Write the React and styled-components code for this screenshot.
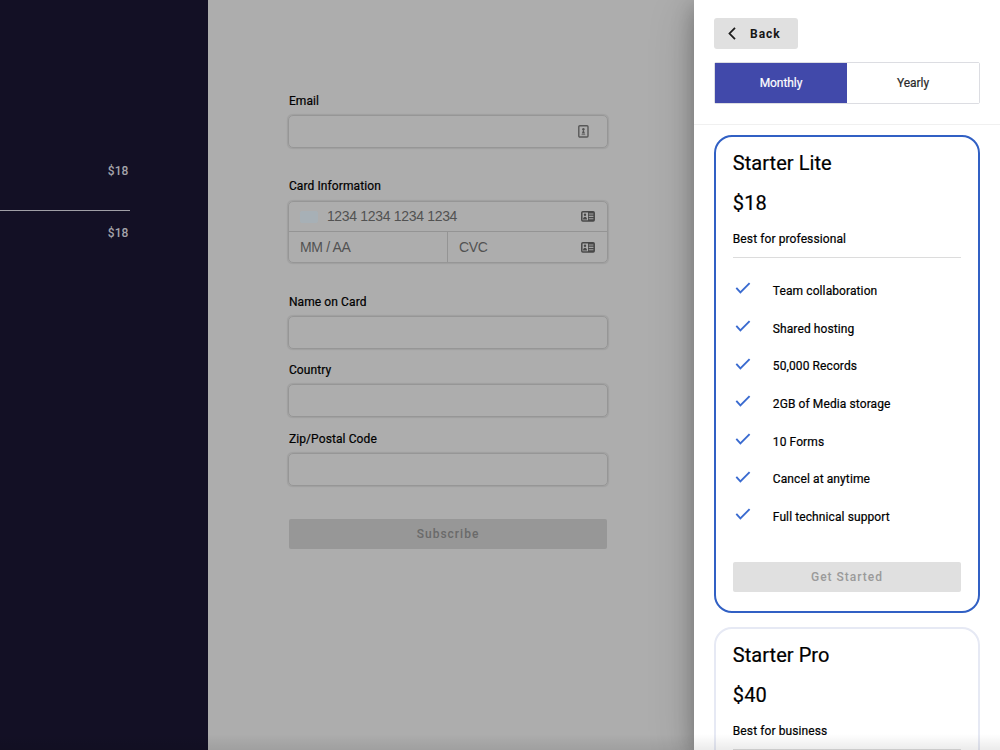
import React from 'react'
import styled, { createGlobalStyle } from 'styled-components';

const plans = [
  {
    name: 'Starter Lite',
    price: '$18',
    note: 'Best for professional',
    active: true,
    features: [
      'Team collaboration',
      'Shared hosting',
      '50,000 Records',
      '2GB of Media storage',
      '10 Forms',
      'Cancel at anytime',
      'Full technical support',
    ],
  },
  { name: 'Starter Pro', price: '$40', note: 'Best for business' },
];

function ContactIcon() {
  return (
    <svg width="11" height="13" viewBox="0 0 11 13" fill="none">
      <rect x="0.8" y="0.8" width="9.2" height="11.2" rx="1" stroke="#585858" strokeWidth="1.4" />
      <circle cx="5.4" cy="4.2" r="1.2" fill="#555" />
      <path d="M5.4 4.6 L7 8.4 H3.8 Z" fill="#555" />
      <path d="M3.6 9.6 H7.2" stroke="#686868" strokeWidth="0.9" />
    </svg>
  )
}

function CardIcon() {
  return (
    <svg width="14" height="11" viewBox="0 0 14 11" fill="none">
      <rect x="0.8" y="0.8" width="12.4" height="9.2" rx="1" stroke="#484848" strokeWidth="1.5" />
      <path d="M7 1 H13 V10 H7 Z" fill="#484848" />
      <path d="M7.8 3 H12.4 M7.8 5.4 H12.4 M7.8 7.8 H12.4" stroke="#a2a2a2" strokeWidth="1.1" />
      <circle cx="4" cy="3.8" r="1.2" fill="#484848" />
      <path d="M2 8.6 C2 4.8 6 4.8 6 8.6 Z" fill="#484848" />
    </svg>
  )
}

function CheckIcon() {
  return (
    <svg width="16" height="12" viewBox="0 0 16 12" fill="none">
      <path d="M1.3 5.9 L5.4 10.3 L14.6 1.1" stroke="#3a6bd0" strokeWidth="1.9" />
    </svg>
  )
}

function BackIcon() {
  return (
    <svg width="8" height="13" viewBox="0 0 8 13" fill="none">
      <path d="M7 0.8 L1.5 6.5 L7 12.2" stroke="#1c1c1c" strokeWidth="1.8" />
    </svg>
  )
}

function Plan({ plan }) {
  return (
    <PlanCard $active={plan.active}>
      <PlanTitle>{plan.name}</PlanTitle>
      <PlanPrice>{plan.price}</PlanPrice>
      <PlanNote>{plan.note}</PlanNote>
      {plan.features && (
        <>
          <FeatureList>
            {plan.features.map((item) => (
              <Feature key={item}>
                <CheckIcon />
                <span>{item}</span>
              </Feature>
            ))}
          </FeatureList>
          <StartButton disabled>Get Started</StartButton>
        </>
      )}
    </PlanCard>
  )
}

function App() {
  return (
    <>
      <GlobalStyle />
      <Page>
        <Summary>
          <Price>$18</Price>
          <Total><Price>$18</Price></Total>
        </Summary>
        <Form>
          <Label>Email</Label>
          <Field $gap={30}><ContactIcon /></Field>
          <Label>Card Information</Label>
          <CardBox>
            <CardRow>
              <CardCell $grow>
                <CardBrand />
                <Placeholder>1234 1234 1234 1234</Placeholder>
                <CardIcon />
              </CardCell>
            </CardRow>
            <CardRow>
              <CardCell><Placeholder>MM / AA</Placeholder></CardCell>
              <CardCell $grow>
                <Placeholder>CVC</Placeholder>
                <CardIcon />
              </CardCell>
            </CardRow>
          </CardBox>
          <Label>Name on Card</Label>
          <Field $gap={13.4} />
          <Label>Country</Label>
          <Field $gap={13.8} />
          <Label>Zip/Postal Code</Label>
          <Field $gap={32.8} />
          <SubscribeButton disabled>Subscribe</SubscribeButton>
        </Form>
        <Drawer>
          <DrawerHeader>
            <BackButton><BackIcon />Back</BackButton>
            <Toggle>
              <ToggleOption $active>Monthly</ToggleOption>
              <ToggleOption>Yearly</ToggleOption>
            </Toggle>
          </DrawerHeader>
          <PlanList>
            {plans.map((plan) => <Plan key={plan.name} plan={plan} />)}
          </PlanList>
        </Drawer>
        <BottomFade />
      </Page>
    </>
  )
}

export default App;

const GlobalStyle = createGlobalStyle`
* {
  box-sizing: border-box;
}
body {
  margin: 0;
  overflow: hidden;
  font-family: Roboto, "Liberation Sans", sans-serif;
}
button {
  font-family: inherit;
  border: none;
  padding: 0;
}
svg {
  flex: none;
}
`

const Page = styled.div`
  position: relative;
  display: flex;
  width: 1000px;
  height: 750px;
  overflow: hidden;
  background: #adadad;
`

const Summary = styled.aside`
  width: 208.4px;
  height: 100%;
  padding: 163px 78.4px 0 0;
  background: #131025;
`

const Price = styled.div`
  padding-right: 1.5px;
  text-align: right;
  font-size: 12px;
  line-height: 16px;
  font-weight: 500;
  letter-spacing: 0.1px;
  color: #a5a4ab;
`

const Total = styled.div`
  margin-top: 31px;
  padding-top: 14px;
  border-top: 1px solid #a09fa6;
`

const Form = styled.main`
  display: flex;
  flex-direction: column;
  width: 399.6px;
  padding: 93px 0 0 80px;
`

const Label = styled.label`
  margin: 0 0 6px 0.5px;
  font-size: 12px;
  line-height: 16px;
  letter-spacing: 0.1px;
  color: #000;
  -webkit-text-stroke: 0.2px;
`

const Field = styled.div`
  display: flex;
  align-items: center;
  justify-content: flex-end;
  height: 33px;
  margin-bottom: ${({ $gap }) => $gap}px;
  padding-right: 17.5px;
  border: 1px solid #969696;
  border-radius: 5px;
  box-shadow: 0 0 1px 0.5px rgba(0, 0, 0, 0.08);
`

const CardBox = styled.div`
  height: 62px;
  margin: 1px 0 31px;
  border: 1px solid #969696;
  border-radius: 5px;
  box-shadow: 0 0 1px 0.5px rgba(0, 0, 0, 0.08);
`

const CardRow = styled.div`
  display: flex;
  height: 29px;

  & + & {
    height: 31px;
    border-top: 1px solid #949494;
  }
`

const CardCell = styled.div`
  display: flex;
  align-items: center;
  flex: ${({ $grow }) => ($grow ? '1' : '0 0 158px')};
  padding: 0 12px 0 10.5px;

  & + & {
    border-left: 1px solid #949494;
  }
`

const CardBrand = styled.span`
  width: 18px;
  height: 12px;
  margin-right: 9px;
  border-radius: 2px;
  background: #a7b0b6;
`

const Placeholder = styled.span`
  flex: 1;
  font-family: "Liberation Sans", Arial, sans-serif;
  font-size: 14px;
  line-height: 17px;
  letter-spacing: -0.32px;
  color: #525252;
`

const SubscribeButton = styled.button`
  height: 30px;
  margin: 0 0.8px 0 0.5px;
  border-radius: 2px;
  background: #979797;
  color: #6a6a6a;
  font-size: 12px;
  font-weight: 500;
  letter-spacing: 1px;
`

const Drawer = styled.section`
  position: absolute;
  top: 0;
  right: 0;
  width: 306px;
  height: 100%;
  background: #fff;
  box-shadow: 0 6px 20px rgba(0, 0, 0, 0.26), 0 10px 44px rgba(0, 0, 0, 0.18);
`

const DrawerHeader = styled.header`
  height: 125px;
  padding: 18px 20px 0;
  border-bottom: 1px solid #f0f0f0;
`

const BackButton = styled.button`
  display: flex;
  align-items: center;
  gap: 14px;
  width: 84px;
  height: 31px;
  padding-left: 14px;
  border-radius: 3px;
  background: #e0e0e0;
  color: #161616;
  font-size: 12px;
  font-weight: 700;
  letter-spacing: 1px;
`

const Toggle = styled.div`
  display: flex;
  height: 42px;
  margin-top: 13px;
  border: 1px solid #dcdde2;
  border-radius: 2px;
`

const ToggleOption = styled.div`
  flex: 1;
  text-align: center;
  font-size: 12px;
  line-height: 40px;
  letter-spacing: -0.05px;
  -webkit-text-stroke: 0.2px;
  background: ${({ $active }) => ($active ? '#4149aa' : '#fff')};
  color: ${({ $active }) => ($active ? '#fff' : '#2a2a2a')};
`

const PlanList = styled.div`
  display: flex;
  flex-direction: column;
  gap: 14px;
  padding: 10px 20px;
`

const PlanCard = styled.article`
  height: 478px;
  padding: 12px 16.8px 0;
  border: 2px solid ${({ $active }) => ($active ? '#3160c4' : '#e6e9f4')};
  border-radius: 18px;
  color: #000;
  -webkit-text-stroke: 0.2px;
`

const PlanTitle = styled.h2`
  margin: 0;
  font-size: 20px;
  line-height: 28px;
  font-weight: 400;
  letter-spacing: 0.05px;
`

const PlanPrice = styled.div`
  margin-top: 12px;
  font-size: 20px;
  line-height: 28px;
  letter-spacing: 0.1px;
`

const PlanNote = styled.div`
  height: 33px;
  margin-top: 8px;
  padding-top: 6px;
  border-bottom: 1px solid #dcdcdc;
  font-size: 12px;
  line-height: 16px;
  letter-spacing: 0.1px;
`

const FeatureList = styled.ul`
  margin: 14px 0 0;
  padding: 0;
  list-style: none;
`

const Feature = styled.li`
  display: flex;
  align-items: center;
  gap: 22px;
  height: 37.7px;
  padding-left: 2px;
  font-size: 12px;
  line-height: 16px;
  letter-spacing: 0.1px;

  svg {
    margin-bottom: 5px;
  }
`

const StartButton = styled.button`
  width: 100%;
  height: 30px;
  margin-top: 26px;
  border-radius: 2px;
  background: #e0e0e0;
  color: #9a9a9a;
  font-size: 12px;
  font-weight: 500;
  letter-spacing: 1px;
  -webkit-text-stroke: 0;
`

const BottomFade = styled.div`
  position: absolute;
  right: 0;
  bottom: 0;
  left: 0;
  height: 16px;
  background: linear-gradient(rgba(0, 0, 0, 0), rgba(0, 0, 0, 0.08));
`
